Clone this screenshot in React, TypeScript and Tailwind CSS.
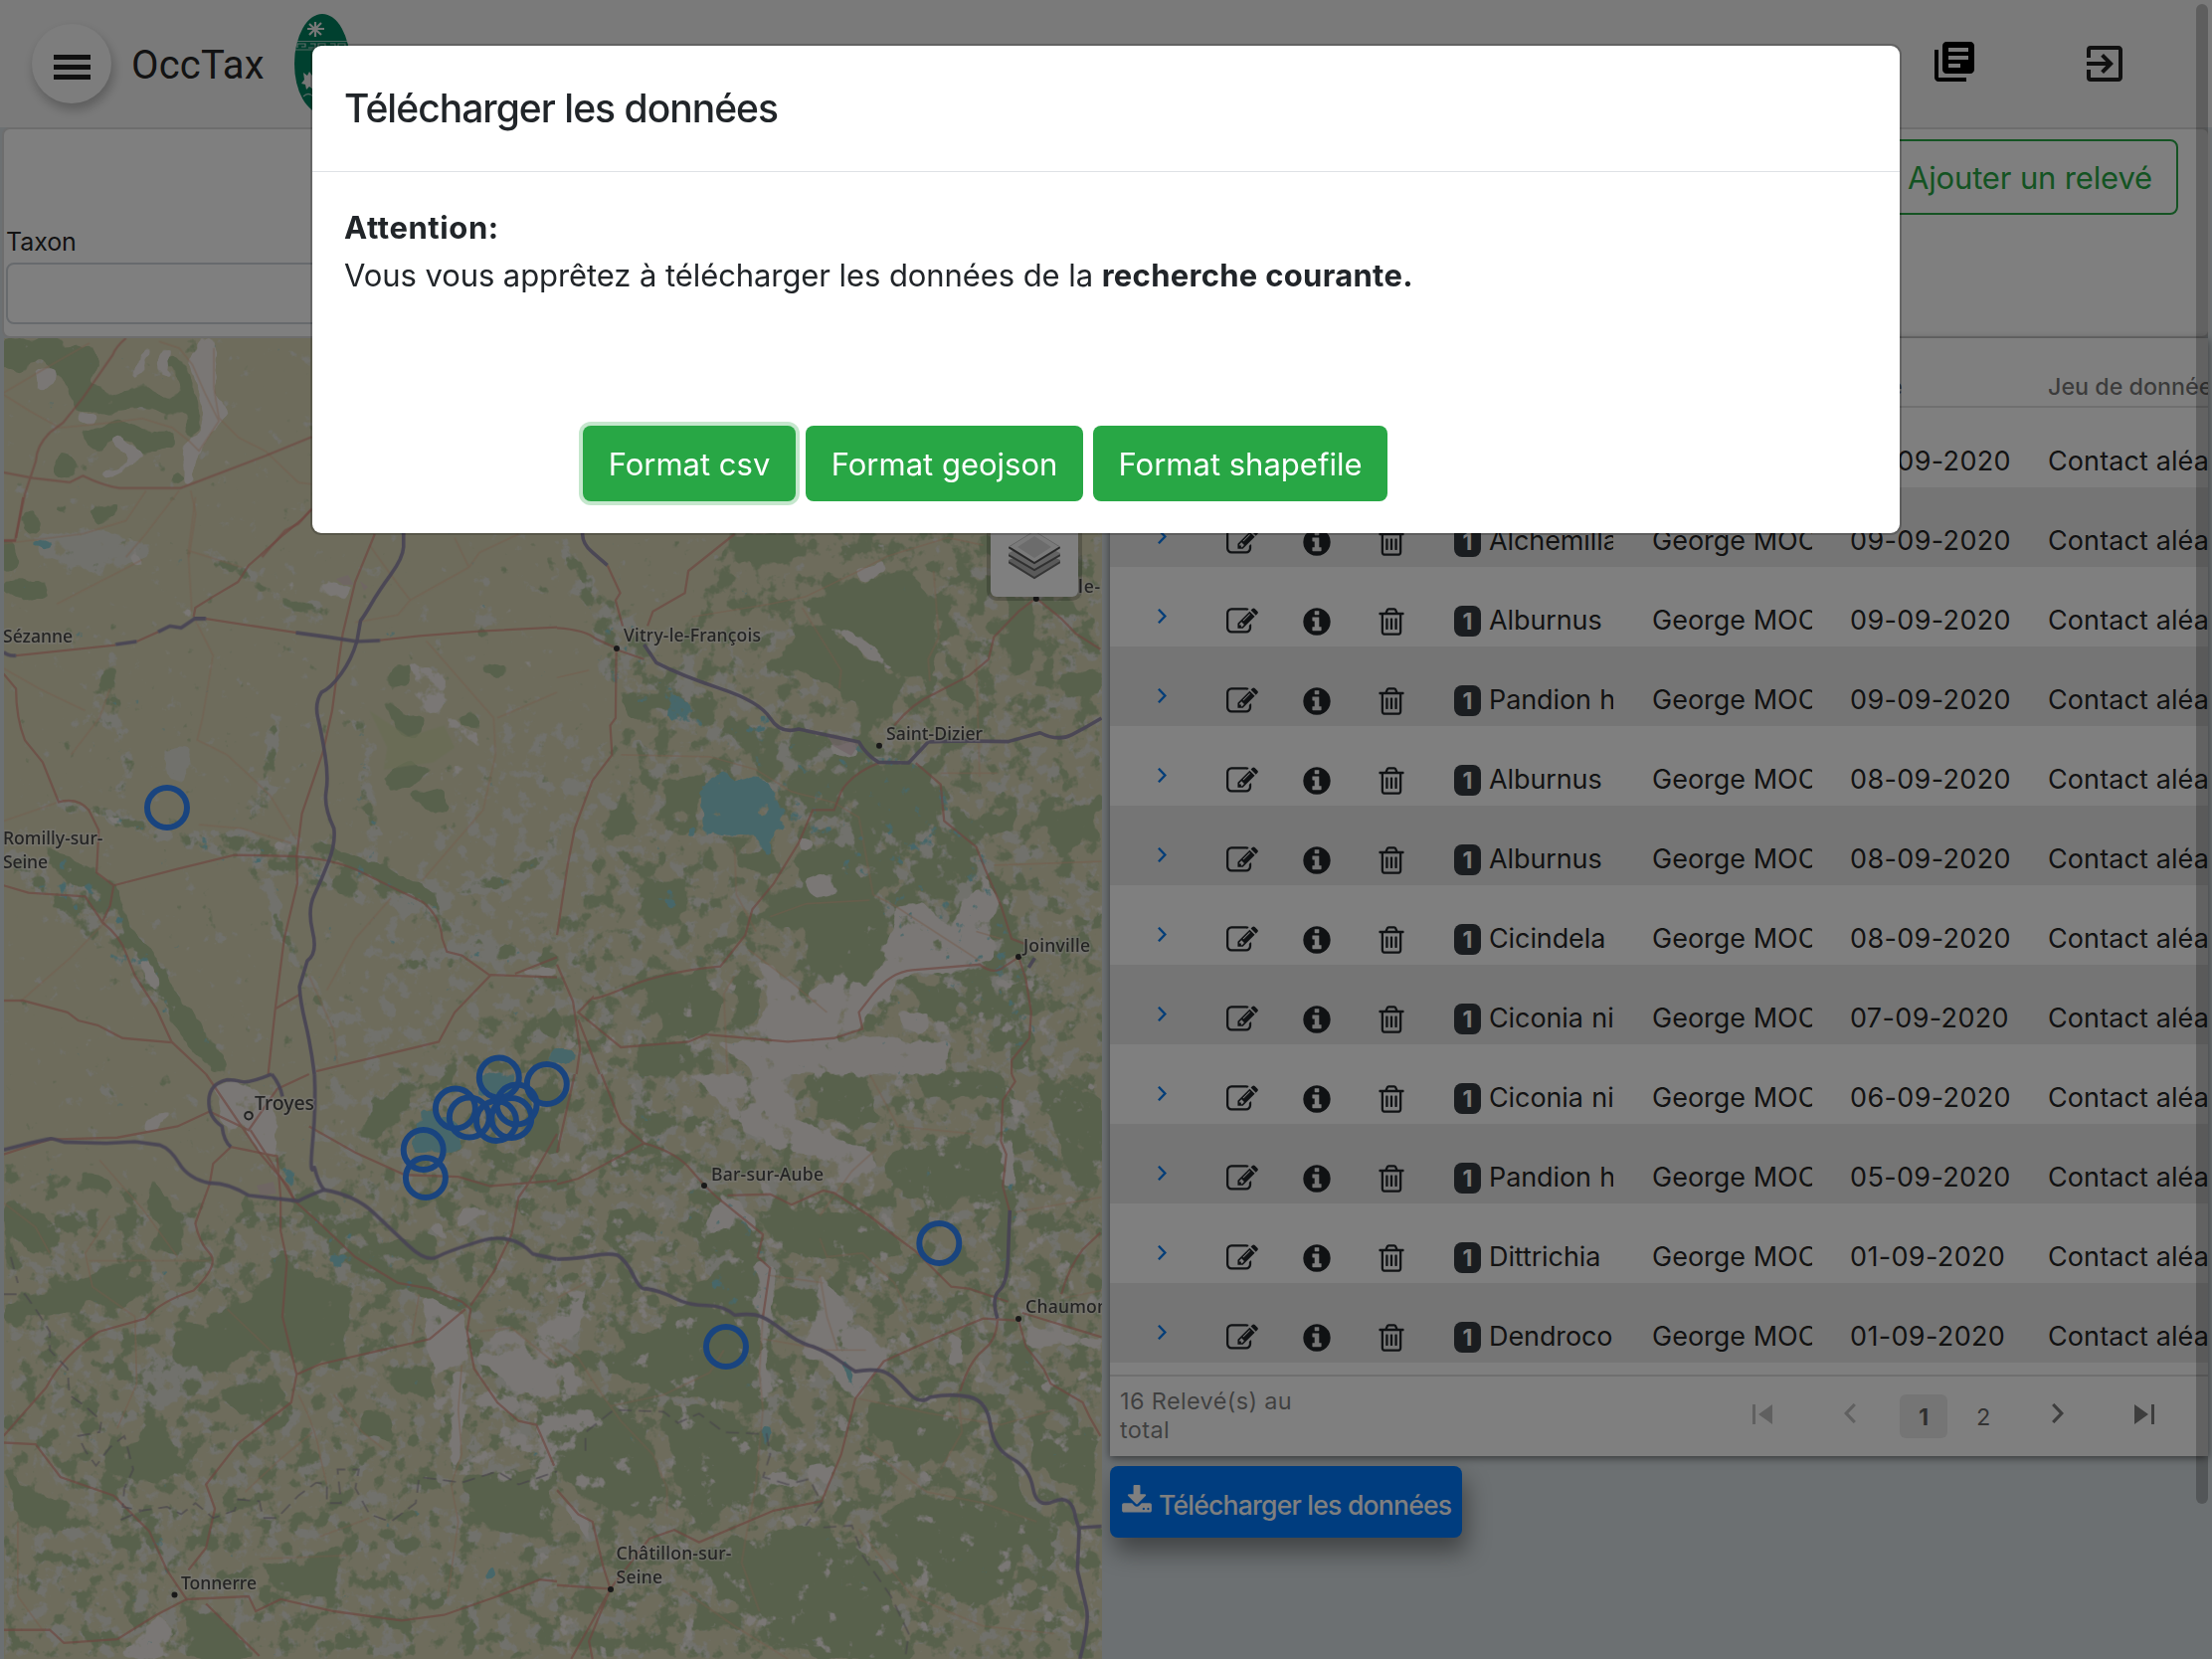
import React from "react";
import { MdExitToApp, MdLibraryBooks } from "react-icons/md";

type Row = { taxon: string; date: string; wide?: boolean };

const rows: Row[] = [
  { taxon: "Alburnus a", date: "09-09-2020", wide: true },
  { taxon: "Alchemilla", date: "09-09-2020" },
  { taxon: "Alburnus a", date: "09-09-2020", wide: true },
  { taxon: "Pandion h", date: "09-09-2020" },
  { taxon: "Alburnus a", date: "08-09-2020", wide: true },
  { taxon: "Alburnus a", date: "08-09-2020", wide: true },
  { taxon: "Cicindela", date: "08-09-2020" },
  { taxon: "Ciconia ni", date: "07-09-2020" },
  { taxon: "Ciconia ni", date: "06-09-2020" },
  { taxon: "Pandion h", date: "05-09-2020" },
  { taxon: "Dittrichia", date: "01-09-2020" },
  { taxon: "Dendroco", date: "01-09-2020" },
];

const EDIT =
  "M888 1184l116-116-152-152-116 116v56h96v96h56zm440-720q-16-16-33 1l-350 350q-17 17-1 33t33-1l350-350q17-17 1-33zm80 594v190q0 119-84.5 203.5t-203.5 84.5h-832q-119 0-203.5-84.5t-84.5-203.5v-832q0-119 84.5-203.5t203.5-84.5h832q63 0 117 25 15 7 18 23 3 17-9 29l-49 49q-14 14-32 8-23-6-45-6h-832q-66 0-113 47t-47 113v832q0 66 47 113t113 47h832q66 0 113-47t47-113v-126q0-13 9-22l64-64q15-15 35-7t20 29zm-96-738l288 288-672 672h-288v-288zm444 132l-92 92-288-288 92-92q28-28 68-28t68 28l152 152q28 28 28 68t-28 68z";
const INFO =
  "M1152 1376v-160q0-14-9-23t-23-9h-96v-512q0-14-9-23t-23-9h-320q-14 0-23 9t-9 23v160q0 14 9 23t23 9h96v320h-96q-14 0-23 9t-9 23v160q0 14 9 23t23 9h448q14 0 23-9t9-23zm-128-896v-160q0-14-9-23t-23-9h-192q-14 0-23 9t-9 23v160q0 14 9 23t23 9h192q14 0 23-9t9-23zm640 416q0 209-103 385.5t-279.5 279.5-385.5 103-385.5-103-279.5-279.5-103-385.5 103-385.5 279.5-279.5 385.5-103 385.5 103 279.5 279.5 103 385.5z";
const TRASH =
  "M704 736v576q0 14-9 23t-23 9h-64q-14 0-23-9t-9-23v-576q0-14 9-23t23-9h64q14 0 23 9t9 23zm256 0v576q0 14-9 23t-23 9h-64q-14 0-23-9t-9-23v-576q0-14 9-23t23-9h64q14 0 23 9t9 23zm256 0v576q0 14-9 23t-23 9h-64q-14 0-23-9t-9-23v-576q0-14 9-23t23-9h64q14 0 23 9t9 23zm128 724v-948h-896v948q0 22 7 40.5t14.5 27 10.5 8.5h832q3 0 10.5-8.5t14.5-27 7-40.5zm-672-1076h448l-48-117q-7-9-17-11h-317q-10 2-17 11zm928 32v64q0 14-9 23t-23 9h-96v948q0 83-47 143.5t-113 60.5h-832q-66 0-113-58.5t-47-141.5v-952h-96q-14 0-23-9t-9-23v-64q0-14 9-23t23-9h309l70-167q15-37 54-63t79-26h320q40 0 79 26t54 63l70 167h309q14 0 23 9t9 23z";
const DOWNLOAD =
  "M1344 1344q0-26-19-45t-45-19-45 19-19 45 19 45 45 19 45-19 19-45zm256 0q0-26-19-45t-45-19-45 19-19 45 19 45 45 19 45-19 19-45zm128-224v320q0 40-28 68t-68 28h-1472q-40 0-68-28t-28-68v-320q0-40 28-68t68-28h465l135 136q58 56 136 56t136-56l136-136h464q40 0 68 28t28 68zm-325-569q17 41-14 70l-448 448q-18 19-45 19t-45-19l-448-448q-31-29-14-70 17-39 59-39h256v-448q0-26 19-45t45-19h256q26 0 45 19t19 45v448h256q42 0 59 39z";

function Glyph({ d, className = "" }: { d: string; className?: string }) {
  return (
    <svg viewBox="0 0 1792 1792" className={`size-8 shrink-0 ${className}`} fill="currentColor">
      <path d={d} />
    </svg>
  );
}

function Chevron({ left = false, className = "" }: { left?: boolean; className?: string }) {
  return (
    <svg viewBox="0 0 12 20" className={className} fill="none" stroke="currentColor" strokeWidth="3.2">
      <path d={left ? "M10.8 1L2.2 10l8.6 9" : "M1.2 1l8.6 9-8.6 9"} />
    </svg>
  );
}

/* The map is drawn in page coordinates; each quarter has its own local grid. */
const T_TOP = "translate(0,330) scale(.33333,.33333)";
const T_NW = "translate(0,500) scale(.35714,.3699)";
const T_NE = "translate(560,500) scale(.35714,.3699)";
const T_SW = "translate(0,1080) scale(.35714,.375)";
const T_SE = "translate(560,1080) scale(.35714,.375)";

const forestsTop = [
  "10,30 190,30 200,60 270,50 300,100 270,160 330,200 450,180 500,210 560,190 520,130 480,90 520,80 570,120 600,250 600,310 560,310 560,260 430,240 340,260 230,250 180,140 120,90 60,140 10,110",
  "250,310 360,280 440,310 520,310 530,360 420,380 390,340 330,340 300,370 260,350",
  "165,400 190,370 230,400 210,450 160,450",
  "530,430 558,440 555,470 520,460",
  "60,580 100,550 120,610 80,620",
  "280,550 360,520 350,560 310,600 285,585",
  "160,535 200,530 205,560 170,555",
  "10,640 40,650 50,690 10,690",
];
const forestsNW = [
  "10,130 40,120 50,190 10,200",
  "60,40 100,30 110,90 70,100",
  "10,230 60,220 130,240 140,280 90,280 10,260",
  "1095,480 1120,450 1155,460 1150,510 1110,515",
  "1355,465 1400,450 1445,462 1395,495",
  "1080,560 1140,590 1200,600 1170,660 1120,640",
  "1290,590 1340,590 1360,640 1300,620",
  "1075,760 1150,715 1220,740 1150,790 1090,800",
  "1150,800 1250,790 1265,850 1215,860",
  "130,950 200,980 300,1040 340,1080 340,1130 290,1070 190,1040",
  "340,1110 370,1180 420,1230 480,1330 560,1420 640,1540 600,1568 520,1480 440,1330 350,1160",
  "840,940 920,945 1000,980 1180,1050 1230,1100 1260,1150 1200,1090 1100,1060 1000,1010 930,965",
  "1520,1420 1568,1380 1568,1470 1530,1460",
];
const forestsNE = [
  "500,110 640,100 700,150 600,170 510,180",
  "640,400 740,350 850,420 960,500 940,590 900,600 780,510 700,480 640,460",
  "740,290 860,240 980,200 1060,280 1060,480 950,480 860,380 740,330",
  "1270,270 1340,280 1330,470 1290,480",
  "1420,490 1510,460 1533,520 1440,540",
  "170,520 220,540 250,600 200,600",
  "850,740 930,720 1050,740 1060,890 960,915 890,900 855,840",
  "300,770 410,760 400,860 310,850",
  "140,850 190,850 200,910 150,920",
  "670,980 820,940 850,1050 930,1160 870,1340 720,1290 700,1180 560,1140 620,1080 700,1060",
  "505,970 600,970 620,1010 510,1010",
  "250,1050 350,1040 360,1120 310,1160 250,1110",
  "250,1310 400,1290 470,1370 420,1460 310,1460",
  "510,1300 575,1310 560,1430 505,1420",
  "1010,1320 1130,1340 1120,1440 1020,1400",
  "1360,870 1500,840 1525,920 1420,960",
  "1080,490 1170,520 1160,560 1110,550",
  "1220,870 1290,850 1280,910 1220,910",
  "230,1500 380,1480 380,1568 240,1568",
];
const forestsSW = [
  "800,500 850,540 990,590 960,770 860,770 820,740 740,730 600,800 490,760 490,700 700,610 740,560",
  "1050,470 1140,440 1220,430 1220,490 1140,490",
  "250,540 330,510 410,570 350,630 240,600 220,640 100,640 10,660 20,620 120,600",
  "400,960 460,940 520,1060 420,1100 300,1060 300,1000 400,990",
  "620,850 780,830 820,890 680,910",
  "430,280 500,370 510,480 470,470 420,360",
  "1300,1080 1560,1060 1520,1240 1400,1220 1320,1150",
  "1480,60 1568,0 1568,210 1500,200",
  "1380,210 1450,210 1450,270 1400,260",
  "1000,160 1130,20 1150,80 1060,170",
  "740,1310 850,1320 960,1260 930,1400 780,1380",
  "530,1450 620,1460 720,1568 520,1568",
  "10,1050 90,1130 190,1150 180,1220 60,1200",
  "230,260 310,280 320,310 240,300",
  "10,340 120,380 180,450 80,480 20,400",
  "1110,790 1210,790 1220,860 1120,850",
  "1030,900 1110,920 1090,980 1010,960",
  "330,760 380,800 370,830 330,810",
  "1520,900 1568,880 1568,1000 1520,980",
];
const forestsSE = [
  "700,0 860,0 900,120 840,150 740,110",
  "1000,0 1250,0 1240,60 1040,60",
  "940,210 1240,190 1240,310 1100,340 980,330 920,260",
  "1350,30 1530,60 1533,260 1440,260 1400,130",
  "560,370 880,380 980,480 850,490 700,490 620,440",
  "390,560 560,530 590,610 480,640 380,600",
  "310,620 400,620 580,680 540,880 320,860 140,790 220,700 320,680",
  "620,580 720,570 740,670 620,640",
  "870,880 1130,920 1090,1040 1000,1040 880,950",
  "0,880 100,860 240,960 310,1120 260,1190 100,1140 0,1060",
  "300,890 480,900 560,1000 560,1110 400,1210 340,1100",
  "880,1200 1000,1140 1160,1140 1330,1220 1250,1400 1160,1420 1020,1360",
  "380,1290 700,1210 900,1300 1000,1568 740,1568 500,1420",
  "1340,950 1500,980 1520,1100 1420,1100 1340,1030",
  "1240,950 1300,1100 1380,1250 1300,1250 1230,1050",
  "150,370 200,360 210,430 140,430",
];
const lightTop = [
  "600,30 650,30 650,200 690,260 640,310 590,400 580,460 555,480 560,350 610,310 610,230 570,100",
  "480,80 520,60 500,100 530,160 470,130",
  "440,60 460,60 430,130 390,170 400,130",
  "330,330 370,320 380,350 430,370 420,400 360,440 270,450 300,435 350,430 390,390",
  "100,120 170,120 170,160 120,190",
  "230,255 300,265 280,290 240,285",
];
const lightNW = [
  "860,240 930,235 990,240 975,285 920,265 860,258",
  "1150,450 1240,460 1260,520 1240,580 1350,640 1360,700 1290,640 1240,600 1160,540",
  "1230,740 1290,730 1310,750 1240,780",
  "160,580 190,600 250,590 250,610 190,610 170,620",
  "260,850 330,870 380,870 400,915 340,890 270,870",
  "510,310 540,300 545,330 510,335",
  "940,560 1010,600 1010,620 950,590",
  "770,940 830,935 830,980 780,970",
  "370,1230 420,1250 470,1360 520,1430 460,1380 400,1290",
  "1450,1290 1568,1270 1568,1310 1470,1300",
  "370,100 390,120 400,180 360,180",
];
const lightNE = [
  "950,1110 1030,1100 1110,1180 1150,1100 1200,1020 1240,1090 1220,1200 1230,1250 1140,1290 1000,1290 900,1370 850,1440 760,1480 560,1470 600,1320 660,1370 720,1340 800,1290 870,1340 930,1240",
  "540,1240 640,1300 700,1360 620,1340",
  "840,200 920,170 930,200 860,240",
  "740,340 820,360 900,410 950,470 920,470 850,410",
  "450,1480 700,1480 860,1470 1100,1480 1090,1568 560,1568",
  "960,1400 1040,1400 1040,1450 970,1450",
  "700,1030 780,1020 790,1080 720,1100",
  "680,930 720,930 720,960 690,960",
  "760,670 840,670 850,710 780,700",
];
const lightSW = [
  "1180,590 1300,640 1320,760 1230,810 1190,660",
  "1270,800 1310,800 1300,1000 1270,1100 1280,900",
  "350,1540 420,1480 450,1440 490,1500 480,1568 330,1568",
  "1340,760 1480,860 1568,860 1568,800 1450,730 1380,760",
  "1200,360 1240,400 1260,450 1210,420",
  "1060,1260 1100,1290 1090,1310",
  "600,30 650,20 770,60 780,220 730,210 680,120 640,190",
  "450,100 500,90 440,150 400,140",
  "1300,360 1390,360 1350,390 1290,410",
];
const lightSE = [
  "380,0 620,0 680,120 860,200 910,240 820,300 750,230 560,180 480,100",
  "740,530 800,600 860,680 950,750 900,800 830,890 790,820 700,740 730,640",
  "700,1050 790,1040 745,1140 700,1080",
  "420,360 500,340 560,390 560,430 520,390 430,430",
  "1100,700 1140,700 1140,770 1105,780",
  "560,500 620,520 600,640 580,900 570,780",
  "1250,230 1320,80 1280,60 1290,330 1260,300",
  "600,1060 640,1090 700,1090 680,1110 590,1090",
  "1290,600 1360,680 1450,700 1533,720 1340,730",
  "0,560 80,590 60,700 0,720",
  "0,1130 90,1190 90,1260 30,1170",
];

function Polys({ list, t, o = 1 }: { list: string[]; t: string; o?: number }) {
  return (
    <g transform={t} opacity={o}>
      {list.map((p) => (
        <polygon key={p} points={p} />
      ))}
    </g>
  );
}

const motorways: [string, string][] = [
  [T_NW, "M1136,97V135Q1134,165 1100,210T1045,290T1015,335L1005,390Q990,440 960,480T905,530Q885,560 895,600T915,700T918,800T940,900Q945,940 925,990T885,1080T880,1180T865,1260L843,1330Q845,1370 860,1430T885,1568"],
  [T_NW, "M325,400L385,392M445,366L478,350L510,355L548,330H580M833,368L925,380L1005,392L1070,389M10,420Q20,432 45,430"],
  [T_SW, "M885,0Q890,80 880,180T885,250Q895,290 912,310"],
  [T_SW, "M10,203Q80,185 145,172L180,182L300,185L380,181L450,190Q480,200 505,240T590,292Q640,290 700,325L840,340Q870,325 912,310Q1000,325 1050,370T1150,460T1230,490T1350,448T1500,482L1568,496"],
  [T_SW, "M765,0Q700,25 680,20T640,15Q590,25 588,70T625,140Q630,180 650,195M765,0Q790,30 795,60"],
  [T_SE, "M0,496Q60,495 100,487T170,485Q195,500 215,540T250,575Q290,580 330,600T420,620T500,646Q550,640 575,650T640,690T720,730Q760,745 790,765T840,797Q880,790 910,795T980,845T1050,866Q1110,855 1160,865T1220,940T1280,1030T1340,1110T1400,1145T1460,1190L1470,1220L1465,1330Q1480,1390 1490,1430T1472,1568M1470,1216L1533,1212"],
  [T_SE, "M1275,365Q1272,420 1270,490T1245,580T1240,655"],
  [T_NE, "M72,97Q70,125 100,150L142,185M245,400L280,450Q350,485 460,520T600,600T680,630L850,665Q870,700 905,720L990,722L1045,665L1130,662L1270,664L1360,640Q1410,665 1450,645T1533,600"],
  [T_NE, "M1328,1278L1345,1252"],
];
const redRoads: [string, string][] = [
  [T_TOP, "M380,30Q350,55 340,80L250,210L190,285L150,315Q110,355 108,400L75,500L45,640L10,640M10,435L100,452L210,465L250,445Q310,475 360,482H545L800,385L940,328M940,545L900,590L860,610L790,690"],
  [T_NW, "M65,0L45,110M10,118H45M875,35L850,60L800,100L700,185L670,230L600,270L550,300L545,325M580,330L835,368M1070,388L1180,377L1350,364L1568,353M45,430L325,402M385,392L445,366"],
  [T_NW, "M10,480L45,520Q45,600 70,660L120,720L165,828Q220,815 250,850L278,905L272,1020L320,1055L310,1110L288,1155Q340,1195 355,1240L380,1300L440,1390L483,1480L580,1568M10,1055L80,1075L240,1085L288,1155M320,1055L500,1010L660,972L835,976Q960,985 1040,1030L1190,1100Q1240,1140 1245,1200L1258,1235L1300,1245L1380,1300L1280,1400L1235,1480L890,1560M10,1368H65L190,1400L220,1422L275,1435L345,1470L483,1482M1380,1298L1568,1305M1450,1295L1568,1250"],
  [T_NW, "M1055,100L1000,230L965,370L950,470L935,580L910,690L850,860L835,976L837,1050L800,1200L775,1390L755,1568M775,1390L843,1352"],
  [T_NE, "M142,185L178,260L165,280L185,350M0,355Q80,360 110,385L167,410M500,100L370,200L360,260L270,310L255,350M167,410L165,600L150,620L155,700L100,770L50,900L30,1000L0,1190M170,415L245,440"],
  [T_NE, "M950,620Q1000,560 1060,535L1160,485L1215,440L1230,380L1300,310L1340,280M1350,275L1420,330L1460,370L1530,413M910,720Q830,750 800,800L780,850L720,850L680,940L610,1050L550,1120L530,1190L460,1275Q300,1290 200,1330T100,1360L60,1400L180,1495L370,1480L420,1460L650,1480L780,1470L860,1445L850,1400L890,1350Q940,1290 1000,1285L1190,1270Q1230,1300 1260,1275L1300,1250"],
  [T_NE, "M1010,722L1080,780L1090,880L1180,950L1205,1010L1250,1110L1280,1200L1320,1215M1300,1250L1320,1310L1335,1400L1330,1470L1280,1530V1568M0,1270L45,1370L65,1500L55,1568M60,1420L120,1568"],
  [T_SW, "M580,0L730,210L810,300L830,340L900,400L1000,490L1120,560L1210,575L1300,610L1325,630L1315,690L1335,790L1400,880L1460,930L1510,940L1560,1050M10,215L140,175L330,170L500,140L590,100L700,150L780,40L870,0M590,295L550,400Q560,450 590,480T545,580Q450,610 410,655L280,690Q180,750 130,840L10,970M10,988L100,992L170,1080L320,1130L420,1225L470,1330L525,1408L700,1400L720,1440L790,1408L940,1440L1130,1465L1250,1450L1400,1400L1520,1355L1568,1360"],
  [T_SW, "M650,195L600,240L590,295M650,195L780,220L790,330L790,420L808,500L795,650L835,805L820,880L670,990L580,1100L605,1165L580,1270L530,1330M835,805L900,778L1050,745L1210,710L1310,630M1325,620L1390,530L1440,430L1460,330L1490,290L1568,160M870,140L1000,210L1140,270L1290,275L1380,300L1568,285M705,150L760,230L830,340M10,1490H140L180,1525L330,1515L440,1450L525,1408M580,1420L730,1560"],
  [T_SE, "M0,295L60,280L245,185Q340,210 380,260L415,298L450,330L580,430L565,490L600,520L580,650M125,0L180,130L245,185M480,325L600,322L660,350L750,312L780,318L880,380L960,440L1010,475L1110,570L1160,575L1270,610M1280,0L1290,20L1255,70L1250,180L1265,215L1255,300L1275,370M50,0L0,210"],
  [T_SE, "M1290,660L1200,655L1060,710L920,770L840,870L800,1020L745,1145L610,1170L400,1255L330,1222L260,1245L150,1380L0,1370M0,1115L60,1180L100,1200L130,1320L150,1380L90,1520L100,1568M148,1385L40,1568M1300,660L1320,730L1370,790L1390,830L1480,880L1500,920L1530,970M1310,640L1533,705M1240,655Q1240,710 1200,740T1135,850M1420,590Q1440,520 1480,470L1530,425"],
];
const minorRoads: [string, string][] = [
  [T_TOP, "M10,195L120,130L270,45M180,300L330,285L430,272L520,300L570,340L600,370L660,280L620,200L580,110L540,60L480,40M645,60V180L660,270L720,330L800,370L900,465L940,470M575,490L590,560L570,690M440,490L380,580L250,620L10,650M540,490L440,620L380,690M10,200L90,250L180,300"],
  [T_NW, "M550,0L530,150L540,310M550,335L600,430L570,600L555,660L640,700L760,810L835,930M160,290L400,170M530,145L680,190M1200,390L1390,600L1395,700L1360,850L1190,1040M1000,340L1120,320L1155,280L1320,190L1350,150L1460,100M1155,280L1100,210L1040,130M1320,190L1280,110M60,1368L200,1250L310,1140M10,880L160,830M920,1340L1000,1200L1100,1090M870,1300L940,1450L950,1540M560,890L680,900L820,940M0,460L110,520L240,580M200,700L280,600L310,520M1568,530L1400,600"],
  [T_NE, "M380,325L600,290L700,270L850,200L930,160L1100,110L1200,130M690,300L800,470L795,520M1060,200L1075,380L1045,440L1050,500M180,700L430,705L560,740L660,800L780,830L850,870L890,1080L950,1110L1190,1260M1180,440L1190,760M600,1140L700,1105L880,1095M540,1230L650,1310L760,1400M500,950L505,1080L560,1180M480,1568L470,1350L500,1300M0,490L90,470M1230,1000L1533,990M1250,1200L1180,1180M1080,750L1240,750"],
  [T_SW, "M10,345L100,410L140,480M280,230L400,360L500,490M310,380L240,480L260,570L380,650L385,830L330,950M640,630L760,740M840,860Q890,950 900,1020L920,1100M880,960L780,1040L690,1120M940,860L1020,960L1080,1005M250,500H590M1180,590L1160,700M1350,690L1440,680L1568,780M1300,780L1290,900L1300,1020L1270,1100L1290,1200L1260,1400M730,1300L980,1290M900,1240L1040,1190M50,1200V1400L120,1490"],
  [T_SE, "M0,600L80,560M0,720L60,760L120,850L180,930L270,1020L310,1110V1180M150,890L300,860L430,800L470,740M740,440L760,490L860,480L950,560L990,640M740,540L760,650L790,740M580,640L570,800L580,900L560,1100L530,1250L520,1310L570,1440M600,540L750,560M880,0L960,140L1170,160M900,200L830,260L740,380M850,870L1050,910L1250,940L1400,900M1130,850L1140,960L1080,1060M870,1000L1040,1120L1200,1150L1350,1200M850,1220L1000,1400L1200,1480L1400,1500M350,1380L500,1480L650,1568M1290,370L1533,330M1430,600L1533,580M580,710L760,740L870,740"],
];
const borders: [string, string][] = [
  [T_SW, "M30,490L50,560M10,590L70,590L100,630L140,690V740L190,790L195,860L240,890L285,930L280,960L220,970L240,1010L270,1050L310,1000L350,970L375,1060L350,1110L345,1160L400,1170L470,1160L510,1180L550,1150L600,1190L660,1170L670,1140L730,1145L740,1190L780,1190L840,1130L890,1095L920,1100V1150L960,1150L950,1060H1010L1000,1110L1040,1180L1100,1200L1170,1150L1180,1080L1300,1095L1400,1065L1460,1100L1568,1065M340,1195L400,1170"],
  [T_SE, "M80,1010L80,960L160,900L300,905L340,935L400,910L470,960L590,965L600,1020L580,1080L650,1100L710,1085L745,1150L700,1210M750,1215L830,1210L860,1290L940,1400L990,1500L980,1568"],
];
const rivers: [string, string][] = [
  [T_NW, "M330,430L290,500L285,590L340,650L360,740L340,830M160,840L340,860L430,920L540,920L700,920L780,950L900,950L1050,1000L1200,1080L1260,1180L1300,1240L1400,1250L1568,1260M10,980L180,1000L310,1080L360,1180L430,1260L500,1390L580,1480L640,1568M700,1000L770,1080L790,1180L880,1320L940,1440M770,620L760,820L700,890M1010,600L1030,700L1020,800L1060,880L1040,990M1350,200L1370,300L1350,380M600,170L700,220L800,290L880,300L890,350M1190,1090L1400,1050L1568,960M1120,1290L1250,1230"],
  [T_NE, "M10,110L60,240L120,330L130,470L200,540L400,610L600,640L830,660L1010,730L1170,900L1240,1080L1300,1210L1340,1400L1300,1568"],
  [T_SW, "M770,220L830,320L900,430L990,520L1120,560L1300,620M1320,700L1400,820L1500,940M300,1110L420,1230L480,1340M290,20L340,90"],
  [T_SE, "M245,0L220,200L300,260L415,300L520,380L600,520L590,700L580,1000M1230,0L1310,100L1290,350L1250,580M780,560L800,720L840,860M1250,670L1310,800L1440,900L1520,1000M1330,1160L1400,1240L1350,1400"],
];

function Lines({ list }: { list: [string, string][] }) {
  return (
    <>
      {list.map(([t, d]) => (
        <path key={d} transform={t} d={d} vectorEffect="non-scaling-stroke" />
      ))}
    </>
  );
}

const labels: [string, number, number, number][] = [
  ["Sézanne", 3, 646, 70],
  ["Romilly-sur-", 3, 849, 100.5],
  ["Seine", 3, 872.5, 45],
  ["Vitry-le-François", 627, 644.5, 138],
  ["Saint-Dizier", 891, 744, 97],
  ["Joinville", 1029, 957, 67],
  ["le-D", 1084, 596, 36],
  ["Tonnerre", 182, 1597.5, 76],
  ["Bar-sur-Aube", 715, 1187, 113],
  ["Chaumont", 1031, 1320, 90],
  ["Châtillon-sur-", 619.5, 1567.5, 116],
  ["Seine", 619.5, 1592, 46.5],
];
const towns = [
  [620, 652], [884, 749.7], [1024, 962], [1041.8, 602], [175.5, 1603.5], [708, 1192], [1024, 1326], [614, 1598],
];
const markers = [
  [168, 812], [501.8, 1083.5], [549.8, 1090], [457.9, 1114.5], [471.8, 1123.5], [499, 1127],
  [514.3, 1124], [519.6, 1110.5], [425.7, 1156], [427.9, 1184], [944.3, 1250], [730, 1354],
];

function Noise({ id, seed, freq, color, cut }: { id: string; seed: number; freq: number; color: string; cut: number }) {
  return (
    <filter id={id} filterUnits="userSpaceOnUse" x="4" y="340" width="1104" height="1328" colorInterpolationFilters="sRGB">
      <feGaussianBlur in="SourceAlpha" stdDeviation="2.8" result="density" />
      <feTurbulence type="fractalNoise" baseFrequency={freq} numOctaves="4" seed={seed} result="noise" />
      <feComposite in="density" in2="noise" operator="arithmetic" k2="0.6" k3="0.8" k4="0" result="sum" />
      <feComponentTransfer in="sum" result="mask">
        <feFuncA type="linear" slope="11" intercept={-11 * cut} />
      </feComponentTransfer>
      <feFlood floodColor={color} />
      <feComposite in2="mask" operator="in" />
    </filter>
  );
}

function MapView() {
  return (
    <svg viewBox="4 340 1104 1328" className="block h-[1328px] w-[1104px]" fill="none">
      <defs>
        <Noise id="woods" seed={7} freq={0.05} color="#b0c298" cut={0.66} />
        <Noise id="fields" seed={21} freq={0.05} color="#f4efeb" cut={0.66} />
        <Noise id="towns" seed={40} freq={0.06} color="#e2e2d8" cut={0.66} />
        <Noise id="ponds" seed={3} freq={0.07} color="#8fcfd4" cut={0.68} />
      </defs>
      <rect x="4" y="340" width="1104" height="1328" fill="#dcd9b9" />
      <g filter="url(#towns)" fill="#000">
        <rect x="4" y="340" width="1104" height="1328" opacity=".16" />
        <polygon points="340,1010 520,700 620,760 700,640 1108,540 1108,1668 4,1668 4,1210 300,1220" opacity=".26" />
        <g stroke="#000" strokeWidth="14" opacity=".4"><Lines list={rivers} /></g>
        <polygon points="40,540 90,530 150,545 150,560 90,575 40,560" opacity=".7" />
        <polygon points="165,755 190,750 185,790 170,780" opacity=".9" />
        <polygon points="130,1370 200,1360 210,1400 140,1420" opacity=".6" />
      </g>
      <g filter="url(#woods)" fill="#000">
        <rect x="4" y="340" width="1104" height="1328" opacity=".08" />
        <polygon points="380,1080 520,1000 600,860 610,760 660,690 740,520 1108,540 1108,1668 4,1668 4,1165 200,1210 340,1200" opacity=".33" />
        <polygon points="640,536 1108,536 1108,720 960,740 800,640" opacity=".1" />
        <polygon points="560,1250 1108,1140 1108,1668 560,1668" opacity=".1" />
        <g stroke="#000" strokeWidth="9" opacity=".4"><Lines list={rivers} /></g>
        <Polys list={forestsTop} t={T_TOP} />
        <Polys list={forestsNW} t={T_NW} />
        <Polys list={forestsNE} t={T_NE} />
        <Polys list={forestsSW} t={T_SW} />
        <Polys list={forestsSE} t={T_SE} />
      </g>
      <g filter="url(#fields)" fill="#000">
        <polygon points="660,1000 1108,860 1108,1668 560,1668 480,1250 560,1040" opacity=".22" />
        <polygon points="430,1340 560,1330 600,1430 540,1500 440,1480" opacity=".34" />
        <Polys list={lightTop} t={T_TOP} />
        <Polys list={lightNW} t={T_NW} o={0.6} />
        <Polys list={lightNE} t={T_NE} o={0.8} />
        <Polys list={lightSW} t={T_SW} o={0.8} />
        <Polys list={lightSE} t={T_SE} o={0.7} />
      </g>
      <path transform={T_NW} d="M1040,580L1150,650L1250,620L1280,680L1220,720L1080,740L1090,680Z" fill="#d2d8a8" opacity=".7" />
      <g filter="url(#ponds)" fill="#000">
        <g stroke="#000" strokeWidth="8" opacity=".22"><Lines list={rivers} /></g>
        <g transform={T_NE}>
          <polygon points="400,800 430,765 470,745 500,770 540,758 595,775 605,830 565,850 575,870 625,870 610,900 605,980 570,955 565,920 420,918 408,850" />
          <polygon points="590,790 640,830 700,870 640,900 590,910" opacity=".65" />
          <polygon points="290,530 350,540 400,590 450,600 400,620 320,610" opacity=".45" />
          <polygon points="550,590 620,600 600,640 560,640" opacity=".45" />
          <polygon points="370,840 385,850 385,930 370,930" opacity=".7" />
          <polygon points="310,1060 345,1080 320,1130 300,1100" opacity=".6" />
        </g>
        <g transform={T_SW}>
          <polygon points="1180,90 1290,130 1300,200 1260,215 1160,210 1170,150" />
          <polygon points="1340,10 1400,0 1450,0 1440,50 1350,60" />
          <polygon points="920,470 990,490 985,525 930,510" opacity=".7" />
          <polygon points="1365,1340 1392,1320 1395,1348 1370,1355" />
          <polygon points="780,240 830,270 830,310 790,280" opacity=".4" />
        </g>
        <ellipse cx="565" cy="1062" rx="14" ry="9" />
        <polygon points="28,545 45,542 54,550 44,552" />
        <polygon points="769,1432 776,1440 773,1457 766,1452" />
        <polygon points="846,1366 860,1380 855,1392" opacity=".8" />
      </g>
      <g fill="#e0c8cc" opacity=".7">
        <path d="M830,737L850,741L864,748L856,760L838,750Z" />
        <path d="M258,1192L275,1188L278,1200L262,1202Z" />
        <path d="M338,582L350,578L356,588L345,588ZM362,584L370,590L366,594Z" />
      </g>
      <g stroke="#ecb898" strokeOpacity=".5" strokeWidth="1.7"><Lines list={minorRoads} /></g>
      <g stroke="#dc8c80" strokeOpacity=".66" strokeWidth="2.3"><Lines list={redRoads} /></g>
      <g stroke="#8c8494" strokeWidth="1.8" strokeDasharray="13 7" opacity=".6"><Lines list={borders} /></g>
      <g stroke="#9088a8" strokeWidth="3.6" strokeOpacity=".92" strokeLinejoin="round"><Lines list={motorways} /></g>
      <g fill="#333">
        {towns.map(([x, y]) => (
          <circle key={`${x}-${y}`} cx={x} cy={y} r="3" />
        ))}
      </g>
      <circle cx="250" cy="1121.7" r="3.8" stroke="#444" strokeWidth="2" />
      <g
        fill="#484848"
        stroke="#f2efe9"
        strokeOpacity=".55"
        strokeWidth="3"
        paintOrder="stroke"
        fontFamily="Noto Sans, sans-serif"
        fontSize="17.6"
        fontWeight="500"
      >
        {labels.map(([s, x, y, w]) => (
          <text key={`${s}${x}`} x={x} y={y} textLength={w}>{s}</text>
        ))}
        <text x="256" y="1116" fontSize="19.5" textLength="60">Troyes</text>
      </g>
      <g stroke="#3388ff" strokeWidth="6">
        {markers.map(([x, y]) => (
          <circle key={`${x}-${y}`} cx={x} cy={y} r="20" />
        ))}
      </g>
    </svg>
  );
}

function LayersControl() {
  return (
    <div className="absolute right-5 top-[168px] flex size-24 items-center justify-center rounded-[10px] border-4 border-black/20 bg-white bg-clip-padding">
      <svg viewBox="0 0 52 52" className="mt-1 size-[52px]">
        <path d="M0 33L26 49L52 33V31L26 20L0 31Z" fill="#b4b4b4" />
        <path d="M0 33L26 49L52 33" fill="none" stroke="#6a6a6a" strokeWidth="2" />
        <path d="M0 26L26 41L52 26V24L26 12L0 24Z" fill="#c6c6c6" />
        <path d="M0 26L26 41L52 26" fill="none" stroke="#606060" strokeWidth="2" />
        <path d="M0 18L26 34L52 18L26 2Z" fill="#f4f4f4" />
        <path d="M9 18L26 29L43 18L26 7Z" fill="#d8d8d8" />
        <path d="M0 18L26 34L52 18" fill="none" stroke="#505050" strokeWidth="2" />
        <path d="M0 18L26 2L52 18" fill="none" stroke="#c8c8c8" strokeWidth="1" />
      </svg>
    </div>
  );
}

function Logo() {
  return (
    <svg viewBox="0 0 56 102" className="h-[102px] w-14 shrink-0">
      <ellipse cx="28" cy="51" rx="28" ry="50" fill="#00805e" />
      <g stroke="#eee" strokeWidth="2.2" fill="none">
        <path d="M21 9V24M13 16H30M15 11L27 22M27 10L15 22" />
        <path d="M1 28.5H55M1 37H55" strokeWidth="1.2" opacity=".7" />
        <path d="M3 35V31H11V34H7M14 35H21V31H16M24 35V31H31V34H27M34 35H41V31H36M44 35V31H51V34H47" strokeWidth="1.2" opacity=".8" />
      </g>
      <path d="M9 60l4 3 2-4 3 4 4-1-2 5 3 4-5 1 1 5-4-3-3 3-1-5-4-1 3-4z" fill="#eee" />
      <path d="M9 84q5-5 10 0t8 2" stroke="#eee" fill="none" strokeWidth="1.4" opacity=".7" />
    </svg>
  );
}

function TableRow({ row, shaded }: { row: Row; shaded: boolean }) {
  return (
    <div className={`flex h-20 pt-[34px] text-[27px] leading-10 text-black/[.87] ${shaded ? "bg-[#ebebeb]" : "bg-white"}`}>
      <div className="w-[117px] pl-12 pt-[8px] text-[#0a7cf0]">
        <Chevron className="h-[15px] w-[9px]" />
      </div>
      <div className="flex w-[227px] pt-[4.7px] text-[#212529]">
        <Glyph d={EDIT} />
        <Glyph d={INFO} className="ml-[42.5px]" />
        <Glyph d={TRASH} className="ml-[43.5px]" />
      </div>
      <div className="ml-[2px] flex w-40 overflow-hidden whitespace-nowrap">
        <span className="mt-[5px] flex h-[31px] w-[27px] shrink-0 items-center justify-center rounded-lg bg-[#343a40] text-[23px] font-bold text-white">
          1
        </span>
        <span className={`ml-[8px] tracking-[-0.1px] ${row.wide ? "[word-spacing:6px]" : "[word-spacing:1px]"}`}>{row.taxon}</span>
      </div>
      <div className="ml-[39px] w-[161px] overflow-hidden whitespace-nowrap">George MOC</div>
      <div className="ml-[38px] w-[162px] overflow-hidden whitespace-nowrap tracking-[0.35px]">{row.date}</div>
      <div className="ml-[37px] w-[161px] overflow-hidden whitespace-nowrap tracking-[0.1px]">Contact aléa</div>
    </div>
  );
}

function DataTable() {
  return (
    <div className="w-[1104px] bg-white shadow-[0_2px_8px_rgba(0,0,0,.5)]">
      <div className="flex h-[70px] items-end border-b-2 border-black/[.13] pb-[3px] text-[23.3px] font-medium leading-8 text-black/[.54]">
        <div className="w-[744px]" />
        <div className="w-[199px] tracking-[0.4px]">Date</div>
        <div className="w-[161px] overflow-hidden whitespace-nowrap">Jeu de donnée</div>
      </div>
      {rows.map((row, i) => (
        <TableRow key={i} row={row} shaded={i % 2 === 1} />
      ))}
      <div className="mt-3 flex h-[82px] border-t-2 border-black/[.13] text-[23.5px] text-black/[.5]">
        <div className="w-[200px] pl-[10px] pt-[10px] leading-[29px] tracking-[0.35px]">16 Relevé(s) au total</div>
        <div className="flex text-[#7a7a7a]">
          <svg viewBox="0 0 20 20" className="ml-[446px] mt-[28px] size-5 text-[#c0c0c0]" fill="currentColor">
            <path d="M0 0H3V20H0ZM20 0V20L6 10Z" />
          </svg>
          <Chevron left className="ml-[72px] mt-[27px] h-5 w-3 text-[#c0c0c0]" />
          <div className="ml-[44px] mt-[18px] flex h-11 w-12 items-center justify-center rounded-md bg-black/[.08] pt-[2px] font-bold text-black/60">1</div>
          <div className="ml-[29px] mt-[18px] flex h-11 w-4 items-center pt-[2px] text-black/60">2</div>
          <Chevron className="ml-[60px] mt-[27px] h-5 w-3" />
          <svg viewBox="0 0 20 20" className="ml-[71px] mt-[28px] size-5" fill="currentColor">
            <path d="M17 0H20V20H17ZM0 0V20L14 10Z" />
          </svg>
        </div>
      </div>
    </div>
  );
}

function DownloadModal() {
  const btn = "flex h-[76px] items-center justify-center rounded-lg bg-[#28a745] pt-[2px] text-[31px] text-white";
  return (
    <div className="absolute left-[312px] top-[44px] h-[494px] w-[1600px] rounded-[11px] border-2 border-black/20 bg-white bg-clip-padding text-[#212529]">
      <div className="flex h-[127px] items-center border-b-[1.5px] border-[#dee2e6] px-[32px]">
        <h4 className="text-[39px] font-medium leading-[60px] tracking-[-0.98px]">Télécharger les données</h4>
      </div>
      <div className="px-[32px] pt-[32px] text-[31px] leading-[48px]">
        <p className="font-bold tracking-[0.6px]">Attention:</p>
        <p>
          <span className="tracking-[-0.08px]">Vous vous apprêtez à télécharger les données de la </span>
          <b className="font-bold tracking-[0.3px]">recherche courante.</b>
        </p>
      </div>
      <div className="ml-[272px] mt-[127px] flex">
        <button className={`${btn} w-[214px] shadow-[0_0_0_4px_rgba(40,167,69,.27)]`}>Format csv</button>
        <button className={`${btn} ml-[10px] w-[279px]`}>Format geojson</button>
        <button className={`${btn} ml-[10px] w-[296px]`}>Format shapefile</button>
      </div>
    </div>
  );
}

export default function App() {
  return (
    <div className="relative h-[1668px] w-[2224px] overflow-hidden bg-[#d8e0e4] font-['Inter',sans-serif]">
      <header className="flex h-[128px] items-center bg-[#f5f5f5] pl-8 text-black/[.87]">
        <div className="flex size-20 items-center justify-center rounded-full bg-[#fafafa] shadow-[2px_6px_12px_rgba(0,0,0,.26)]">
          <div className="mt-[7px] flex w-[37px] flex-col gap-[5px]">
            <div className="h-[5px] bg-black/[.87]" />
            <div className="h-[5px] bg-black/[.87]" />
            <div className="h-[5px] bg-black/[.87]" />
          </div>
        </div>
        <h1 className="ml-[20px] w-[164px] pt-[4px] font-['Roboto',sans-serif] text-[40px] leading-none tracking-[0.2px]">OccTax</h1>
        <Logo />
        <MdLibraryBooks className="ml-auto mt-[-5px] size-12 text-black" />
        <MdExitToApp className="ml-[103px] mr-[84px] mt-[-1px] size-12" />
      </header>

      <section className="mx-[2px] flex h-[212px] justify-between rounded-lg border-2 border-black/[.14] bg-white pl-[2px] pr-[30px]">
        <div className="w-[560px]">
          <label className="mt-[95px] block text-[25px] leading-9 tracking-[-0.1px] text-black/[.87]">Taxon</label>
          <div className="mt-[3px] h-[62px] rounded-lg border-2 border-[#ced4da] bg-white" />
        </div>
        <button className="mt-[10px] flex h-[76px] items-center rounded-lg border-2 border-[#28a745] px-6 pt-[2px] text-[31px] tracking-[-0.15px] text-[#28a745]">
          Ajouter un relevé
        </button>
      </section>

      <main className="flex pl-1">
        <div className="relative h-[1328px] w-[1104px]">
          <MapView />
          <LayersControl />
        </div>
        <div className="ml-2">
          <DataTable />
          <button className="mt-[10px] flex h-[72px] w-[354px] items-center whitespace-nowrap rounded-lg bg-[#007bff] pl-[11px] text-[26.5px] font-medium text-white shadow-[4px_14px_24px_rgba(0,0,0,.4)]">
            <Glyph d={DOWNLOAD} className="mt-[-3px]" />
            <span className="ml-[6px] pt-[7px] tracking-[-0.75px]">Télécharger les données</span>
          </button>
        </div>
      </main>

      <div className="absolute inset-0 bg-black/50" />
      <div className="absolute right-1 top-1 h-[1508px] w-3 rounded-full bg-black/[.23]" />
      <DownloadModal />
    </div>
  );
}
